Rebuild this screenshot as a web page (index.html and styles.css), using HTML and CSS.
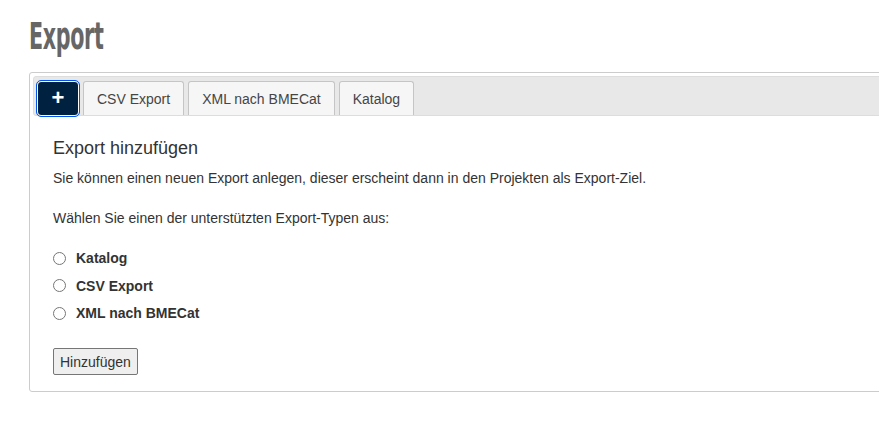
FILE: index.html
```html
<!DOCTYPE html>
<html lang="de">
<head>
<meta charset="utf-8">
<title>Export</title>
<link rel="stylesheet" href="styles.css">
</head>
<body>
<div class="page">
  <h1 class="title">Export</h1>
  <div class="panel">
    <ul class="tabs">
      <li class="tab tab-add"><span class="plus">+</span></li>
      <li class="tab">CSV Export</li>
      <li class="tab">XML nach BMECat</li>
      <li class="tab">Katalog</li>
    </ul>
    <div class="content">
      <h2 class="heading">Export hinzufügen</h2>
      <p class="text">Sie können einen neuen Export anlegen, dieser erscheint dann in den Projekten als Export-Ziel.</p>
      <p class="text">Wählen Sie einen der unterstützten Export-Typen aus:</p>
      <div class="options">
        <label class="option"><input type="radio" name="type"><span>Katalog</span></label>
        <label class="option"><input type="radio" name="type"><span>CSV Export</span></label>
        <label class="option"><input type="radio" name="type"><span>XML nach BMECat</span></label>
      </div>
      <button class="btn" type="button">Hinzufügen</button>
    </div>
  </div>
</div>
</body>
</html>
```
FILE: styles.css
```css
html, body {
  margin: 0;
  padding: 0;
  overflow: hidden;
  background: #fff;
}
body {
  font-family: "Liberation Sans", Arial, sans-serif;
  color: #333;
  font-size: 14px;
}
.page {
  padding: 14px 0 0 29px;
  width: 860px;
}
.title {
  margin: 0 0 12px 0;
  font-family: "DejaVu Sans", sans-serif;
  font-stretch: condensed;
  font-weight: bold;
  font-size: 37px;
  line-height: 46px;
  color: #666;
  letter-spacing: -0.5px;
  transform: scaleX(0.62);
  transform-origin: left center;
}
.panel {
  border: 1px solid #ccc;
  border-radius: 3px;
  padding: 3px;
  width: 900px;
}
.tabs {
  list-style: none;
  margin: 0;
  padding: 4px 4px 0 2px;
  display: flex;
  gap: 4px;
  background: #e8e8e8;
  border: 1px solid #ddd;
  border-radius: 3px;
  height: 34px;
}
.tab {
  box-sizing: border-box;
  height: 34px;
  padding: 8px 13px 0 13px;
  background: #f6f6f6;
  border: 1px solid #c5c5c5;
  border-bottom: none;
  border-radius: 3px 3px 0 0;
  font-size: 14px;
  line-height: 18px;
  color: #454545;
}
.tab-add {
  width: 42px;
  height: 35px;
  padding: 0;
  background: #002140;
  border: 1px solid #fff;
  border-radius: 4px;
  outline: 1px solid #0055ee;
  outline-offset: 0;
  display: flex;
  align-items: center;
  justify-content: center;
  margin-left: 1px;
}
.plus {
  color: #fff;
  font-weight: bold;
  font-size: 22px;
  line-height: 22px;
  margin-top: -2px;
}
.content {
  padding: 21px 20px 13px 20px;
}
.heading {
  margin: 0 0 9px 0;
  font-size: 18px;
  font-weight: normal;
  line-height: 22px;
  color: #333;
}
.text {
  margin: 0 0 20px 0;
  font-size: 14px;
  line-height: 20px;
  color: #333;
}
.options {
  display: flex;
  flex-direction: column;
  gap: 7.5px;
  margin-top: 20px;
}
.option {
  display: flex;
  align-items: center;
  height: 20px;
  font-weight: bold;
  font-size: 14px;
  color: #333;
}
.option input {
  margin: 0 10px 0 0;
  width: 13px;
  height: 13px;
}
.btn {
  margin-top: 25px;
  box-sizing: border-box;
  font-family: "Liberation Sans", Arial, sans-serif;
  font-size: 14px;
  color: #333;
  background: #efefef;
  border: 1px solid #767676;
  border-radius: 2px;
  padding: 3px 6px;
  height: 27px;
  line-height: 18px;
}
```
